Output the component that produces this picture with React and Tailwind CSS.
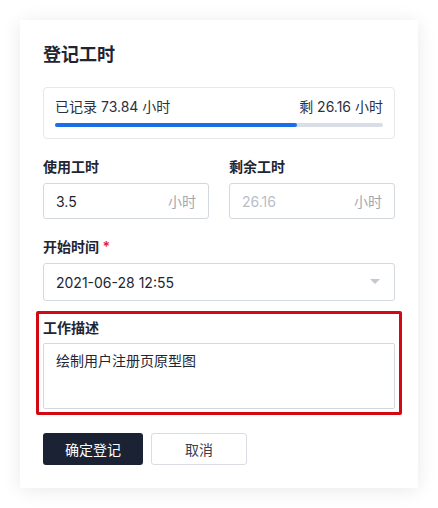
import { useState } from 'react';

const FONT = { fontFamily: 'Inter, "Noto Sans CJK SC", sans-serif' };

function App() {
    const [used, setUsed] = useState('3.5');
    const [desc, setDesc] = useState('绘制用户注册页原型图');
    const logged = 73.84;
    const left = 26.16;
    // share of the bar already logged
    const pct = (logged / (logged + left)) * 100;

    return (
        <div className="min-h-[508px] bg-white p-5" style={FONT}>
            <div className="w-[398px] bg-white px-[23px] pt-[23px] pb-[23px] shadow-[0_2px_18px_rgba(0,0,0,0.09)]">
                <h2 className="text-[18px] leading-[24px] font-semibold text-[#1e2533]">登记工时</h2>

                {/* Logged / remaining summary */}
                <div className="mt-5 rounded border border-[#e6e8ec] px-[11px] pt-[9px] pb-[11px]">
                    <div className="flex justify-between text-[14px] leading-5 text-[#2a3140]">
                        <span>已记录 73.84 小时</span>
                        <span>剩 26.16 小时</span>
                    </div>
                    <div className="mt-[6px] h-1 rounded-full bg-[#d9dde6]">
                        <div className="h-1 rounded-full bg-[#1a6fe8]" style={{ width: `${pct}%` }} />
                    </div>
                </div>

                {/* Hours */}
                <div className="mt-[18px] grid grid-cols-2 gap-5">
                    <div>
                        <label className="block text-[14px] leading-5 font-semibold text-[#1e2533]">使用工时</label>
                        <div className="mt-[6px] flex h-9 items-center rounded-[3px] border border-[#d3d7de] px-3">
                            <input
                                className="w-full min-w-0 bg-transparent text-[14px] text-[#1e2533] outline-none"
                                value={used}
                                onChange={(e) => setUsed(e.target.value)}
                            />
                            <span className="shrink-0 text-[14px] text-[#a2a8b3]">小时</span>
                        </div>
                    </div>
                    <div>
                        <label className="block text-[14px] leading-5 font-semibold text-[#1e2533]">剩余工时</label>
                        <div className="mt-[6px] flex h-9 items-center rounded-[3px] border border-[#d3d7de] px-3">
                            <span className="flex-1 text-[14px] text-[#b9bec7]">26.16</span>
                            <span className="shrink-0 text-[14px] text-[#a2a8b3]">小时</span>
                        </div>
                    </div>
                </div>

                {/* Start time */}
                <div className="mt-[18px]">
                    <label className="block text-[14px] leading-5 font-semibold text-[#1e2533]">
                        开始时间 <span className="text-[#e5212d]">*</span>
                    </label>
                    <div className="mt-[6px] flex h-[38px] items-center justify-between rounded-[3px] border border-[#d3d7de] pl-3 pr-[14px]">
                        <span className="text-[14px] text-[#1e2533]">2021-06-28 12:55</span>
                        <svg width="10" height="6" viewBox="0 0 10 6">
                            <path d="M0 0h10L5 5z" fill="#c3c7cf" />
                        </svg>
                    </div>
                </div>

                {/* Description, highlighted */}
                <div className="-mx-[7px] mt-[10px] rounded-[2px] border-[3px] border-[#d40812] px-1 pt-1 pb-[3px]">
                    <label className="block text-[14px] leading-5 font-semibold text-[#1e2533]">工作描述</label>
                    <textarea
                        className="mt-[5px] block h-[66px] w-full resize-none rounded-[2px] border border-[#d3d7de] px-3 py-[7px] text-[14px] leading-5 text-[#1e2533] outline-none"
                        value={desc}
                        onChange={(e) => setDesc(e.target.value)}
                    />
                </div>

                {/* Actions */}
                <div className="mt-[18px] flex gap-2">
                    <button className="h-8 w-[100px] rounded-[3px] bg-[#1a2234] text-[14px] text-white">确定登记</button>
                    <button className="h-8 w-24 rounded-[3px] border border-[#d9dce2] bg-white text-[14px] text-[#3a404c]">取消</button>
                </div>
            </div>
        </div>
    );
}

export default App;
